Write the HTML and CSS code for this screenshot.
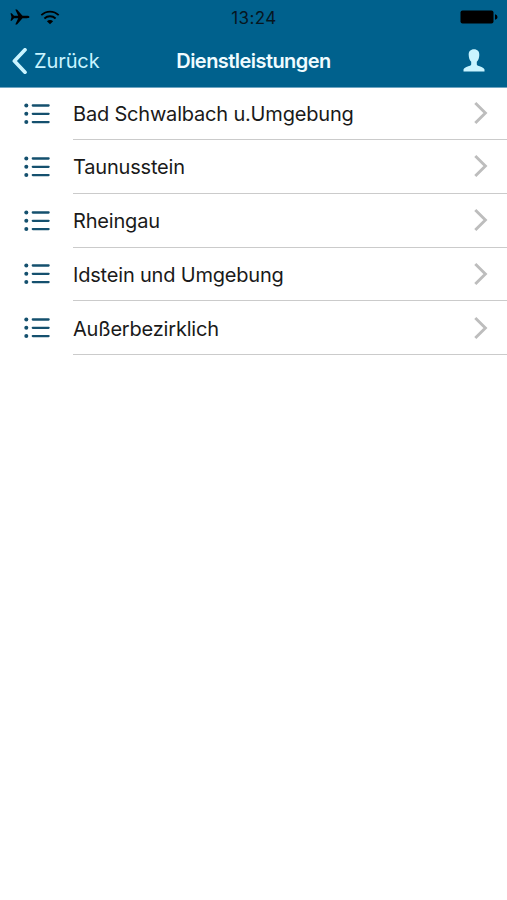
FILE: index.html
```html
<!DOCTYPE html>
<html lang="de">
<head>
    <meta charset="UTF-8">
    <meta name="viewport" content="width=device-width, initial-scale=1.0">
    <title>Dienstleistungen</title>
    <link rel="stylesheet" href="styles.css">
</head>
<body>
    <svg class="symbols" aria-hidden="true">
        <symbol id="list" viewBox="0 0 26 22">
            <g fill="currentColor">
                <circle cx="2.3" cy="2.5" r="2"/>
                <circle cx="2.3" cy="10.8" r="2"/>
                <circle cx="2.3" cy="19.1" r="2"/>
            </g>
            <path d="M8.8 2.5H24.6M8.8 10.8H24.6M8.8 19.1H24.6" stroke="currentColor" stroke-width="2.3" stroke-linecap="round"/>
        </symbol>
        <symbol id="chevron" viewBox="0 0 14 24">
            <path d="M1.3 2L11.4 12L1.3 22" fill="none" stroke="currentColor" stroke-width="2.9"/>
        </symbol>
    </svg>

    <header class="header">
        <div class="statusbar">
            <div class="signals">
                <svg class="plane" viewBox="0 0 20 16">
                    <path d="M19.5 8C19.5 7.2 18.3 6.8 17 6.8H12.5L7 .5H5.3L8.2 6.8H4L1.7 4.2H.5L1.5 8L.5 11.8H1.7L4 9.2H8.2L5.3 15.5H7L12.5 9.2H17C18.3 9.2 19.5 8.8 19.5 8Z"/>
                </svg>
                <svg class="wifi" viewBox="0 0 20 15">
                    <path d="M1.3 5.2C6.2.3 13.8.3 18.7 5.2M4.4 8.5C7.6 5.5 12.4 5.5 15.6 8.5" fill="none" stroke="#000" stroke-width="1.8"/>
                    <path d="M10 14.3L6.9 11.3C8.6 9.7 11.4 9.7 13.1 11.3Z"/>
                </svg>
            </div>
            <span class="time">13:24</span>
            <svg class="battery" viewBox="0 0 38 14">
                <rect x=".5" y=".5" width="33" height="13" rx="2"/>
                <path d="M35 4.2C38.3 5 38.3 9 35 9.8Z"/>
            </svg>
        </div>
        <nav class="navbar">
            <a href="#" class="back">
                <svg viewBox="0 0 15 26">
                    <path d="M13 1.8L2.4 13L13 24.2" fill="none" stroke="currentColor" stroke-width="3.7" stroke-linecap="round" stroke-linejoin="round"/>
                </svg>
                <span>Zurück</span>
            </a>
            <h1>Dienstleistungen</h1>
            <a href="#" class="profile" aria-label="Profil">
                <svg viewBox="0 0 22 23">
                    <path d="M11 .3C7.6.3 5.5 2.5 5.7 6C5.8 9 6.6 11.2 8.2 12.8V15.6C8.2 17.4 1.5 17.7.5 20.5V22.6H21.5V20.5C20.5 17.7 13.8 17.4 13.8 15.6V12.8C15.4 11.2 16.2 9 16.3 6C16.5 2.5 14.4.3 11 .3Z" fill="currentColor"/>
                </svg>
            </a>
        </nav>
    </header>

    <main class="list">
        <a href="#" class="item">
            <svg class="icon"><use href="#list"/></svg>
            <div class="content"><span>Bad Schwalbach u.Umgebung</span><svg class="chevron"><use href="#chevron"/></svg></div>
        </a>
        <a href="#" class="item">
            <svg class="icon"><use href="#list"/></svg>
            <div class="content"><span>Taunusstein</span><svg class="chevron"><use href="#chevron"/></svg></div>
        </a>
        <a href="#" class="item">
            <svg class="icon"><use href="#list"/></svg>
            <div class="content"><span>Rheingau</span><svg class="chevron"><use href="#chevron"/></svg></div>
        </a>
        <a href="#" class="item">
            <svg class="icon"><use href="#list"/></svg>
            <div class="content"><span>Idstein und Umgebung</span><svg class="chevron"><use href="#chevron"/></svg></div>
        </a>
        <a href="#" class="item">
            <svg class="icon"><use href="#list"/></svg>
            <div class="content"><span>Außerbezirklich</span><svg class="chevron"><use href="#chevron"/></svg></div>
        </a>
    </main>
</body>
</html>
```
FILE: styles.css
```css
* {
    box-sizing: border-box;
}
body {
    margin: 0;
    min-height: 100vh;
    background: #fff;
    color: #1a1a1a;
    font-family: Inter, "Liberation Sans", sans-serif;
}
a {
    color: inherit;
    text-decoration: none;
}
svg {
    display: block;
    flex: none;
}
.symbols {
    display: none;
}
.header {
    height: 88px;
    background: #00618d;
    border-bottom: 1px solid #6fa5c2;
}
.statusbar {
    display: grid;
    grid-template-columns: 1fr auto 1fr;
    align-items: center;
    height: 34px;
    padding: 0 9px 0 10px;
    color: #07161f;
}
.signals {
    display: flex;
    align-items: center;
    gap: 10px;
}
.plane {
    width: 20px;
    height: 16px;
}
.wifi {
    width: 20px;
    height: 15px;
}
.time {
    padding-top: 1px;
    font-size: 17px;
    letter-spacing: 0.4px;
}
.battery {
    width: 38px;
    height: 14px;
    justify-self: end;
}
.navbar {
    display: grid;
    grid-template-columns: 1fr auto 1fr;
    align-items: center;
    height: 53px;
    padding: 0 22px;
    color: #c9f4ff;
}
.back {
    display: flex;
    align-items: center;
    gap: 7px;
    margin-left: -10px;
    font-size: 20px;
    letter-spacing: -0.1px;
}
.back svg {
    width: 15px;
    height: 26px;
}
h1 {
    margin: 0;
    color: #f0fcff;
    font-size: 20px;
    font-weight: 600;
    letter-spacing: -0.55px;
}
.profile {
    justify-self: end;
}
.profile svg {
    width: 22px;
    height: 23px;
}
.item {
    display: flex;
    align-items: center;
    height: 53.75px;
    padding-left: 24px;
}
.item:first-child {
    height: 52px;
}
.icon {
    width: 26px;
    height: 22px;
    margin-right: 23px;
    color: #14506e;
}
.content {
    flex: 1;
    display: flex;
    align-items: center;
    justify-content: space-between;
    height: 100%;
    padding-right: 19px;
    border-bottom: 1px solid #cbcbcb;
    font-size: 20px;
    letter-spacing: -0.19px;
}
.item + .item span {
    padding-top: 2px;
}
.chevron {
    width: 14px;
    height: 24px;
    color: #bdbdbd;
}
.item:first-child .chevron {
    margin-bottom: 2px;
}
```
